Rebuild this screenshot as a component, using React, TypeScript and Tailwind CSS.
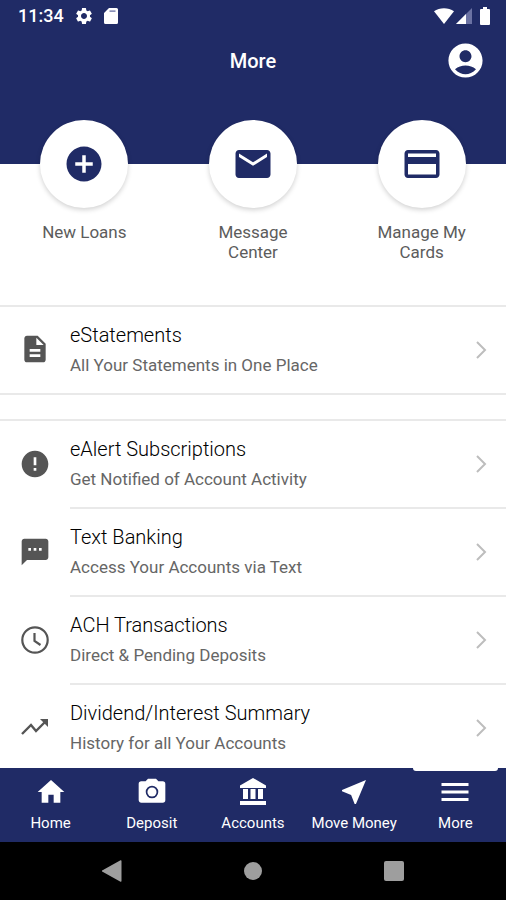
import type { ReactNode } from "react";
import {
  MdAccountCircle,
  MdAddCircle,
  MdCreditCard,
  MdDescription,
  MdError,
  MdHome,
  MdMail,
  MdMenu,
  MdNearMe,
  MdSettings,
  MdSms,
} from "react-icons/md";

type Row = { title: string; detail: string; icon: ReactNode };
type Tab = { label: string; icon: ReactNode; active?: boolean };

const shortcuts = [
  { label: "New Loans", icon: <MdAddCircle className="size-[42px]" /> },
  { label: "Message Center", icon: <MdMail className="size-[42px]" /> },
  { label: "Manage My Cards", icon: <MdCreditCard className="size-[42px]" /> },
];

const statements: Row[] = [
  { title: "eStatements", detail: "All Your Statements in One Place", icon: <MdDescription /> },
];

const services: Row[] = [
  { title: "eAlert Subscriptions", detail: "Get Notified of Account Activity", icon: <MdError /> },
  { title: "Text Banking", detail: "Access Your Accounts via Text", icon: <MdSms /> },
  { title: "ACH Transactions", detail: "Direct & Pending Deposits", icon: <ClockIcon /> },
  { title: "Dividend/Interest Summary", detail: "History for all Your Accounts", icon: <TrendIcon /> },
];

const tabs: Tab[] = [
  { label: "Home", icon: <MdHome className="size-8" /> },
  { label: "Deposit", icon: <CameraIcon /> },
  { label: "Accounts", icon: <BankIcon /> },
  { label: "Move Money", icon: <MdNearMe className="size-8" /> },
  { label: "More", icon: <MdMenu className="size-9" />, active: true },
];

function CameraIcon() {
  return (
    <svg viewBox="0 0 24 24" className="size-8" fill="currentColor" aria-hidden="true">
      <path
        fillRule="evenodd"
        d="M9 2 7.2 4H4a2 2 0 0 0-2 2v12c0 1.100.9 2 2 2h16a2 2 0 0 0 2-2V6a2 2 0 0 0-2-2h-3.200L15 2H9Zm3 5.300a4.700 4.700 0 1 1 0 9.400 4.700 4.700 0 0 1 0-9.400Z"
      />
      <circle cx="12" cy="12" r="3.400" />
    </svg>
  );
}

function BankIcon() {
  return (
    <svg viewBox="0 0 28 28" className="size-7" fill="currentColor" aria-hidden="true">
      <path d="M14 0 1 7.500V10h26V7.500L14 0ZM4 11h5v10H4zM11.500 11h5v10h-5zM19 11h5v10h-5zM1 23h26v4H1z" />
    </svg>
  );
}

function ClockIcon() {
  return (
    <svg viewBox="0 0 32 32" className="size-[1em]" fill="none" stroke="currentColor" strokeWidth="2.2" aria-hidden="true">
      <circle cx="16" cy="16" r="12.700" />
      <path d="M15.500 9v8l6 4" />
    </svg>
  );
}

function TrendIcon() {
  return (
    <svg viewBox="0 0 32 32" className="size-[1em]" fill="none" stroke="currentColor" strokeWidth="2.4" aria-hidden="true">
      <path d="m3 23 9-9 5 6 10-10" />
      <path fill="currentColor" stroke="none" d="M21 8h8v8Z" />
    </svg>
  );
}

function StatusBar() {
  return (
    <div className="flex h-8 items-center justify-between pr-4 pl-[18px]">
      <div className="flex items-center">
        <span className="text-[18px] leading-6 font-medium">11:34</span>
        <MdSettings className="ml-[10px] size-5" />
        <svg viewBox="0 0 14 16" className="ml-[10px] h-4 w-[14px]" aria-hidden="true">
          <path fill="#fff" d="M5 0h7.500A1.500 1.500 0 0 1 14 1.500v13a1.500 1.500 0 0 1-1.500 1.500h-11A1.500 1.500 0 0 1 0 14.500V5Z" />
          <path fill="#8b91b8" d="M5.500 2.300h6v1.700h-6z" />
        </svg>
      </div>
      <div className="flex items-center">
        <svg viewBox="0 0 20 16" className="h-4 w-5" aria-hidden="true">
          <path fill="#fff" d="M10 16 0 3.200C5.500-.9 14.500-.9 20 3.200Z" />
        </svg>
        <svg viewBox="0 0 16 16" className="ml-[2px] size-4" aria-hidden="true">
          <path fill="#6b72a3" d="M16 0v16H0Z" />
          <path fill="#fff" d="M10 6v10H0Z" />
        </svg>
        <svg viewBox="0 0 10 18" className="ml-2 h-[18px] w-[10px]" aria-hidden="true">
          <path fill="#fff" d="M3 0h4v2h2a1 1 0 0 1 1 1v14a1 1 0 0 1-1 1H1a1 1 0 0 1-1-1V3a1 1 0 0 1 1-1h2Z" />
        </svg>
      </div>
    </div>
  );
}

function ListGroup({ rows }: { rows: Row[] }) {
  return (
    <ul className="border-y-2 border-[#e9e9e9]">
      {rows.map((row, index) => (
        <li key={row.title}>
          <button type="button" className="flex w-full items-stretch pl-[19px] text-left">
            <span className="flex w-[51px] shrink-0 items-center pb-[2px] text-[32px] text-[#555]">{row.icon}</span>
            <span
              className={
                index < rows.length - 1
                  ? "flex h-[88px] flex-1 items-center justify-between border-b-2 border-[#e9e9e9] pr-[17px]"
                  : "flex h-[86px] flex-1 items-center justify-between pr-[17px]"
              }
            >
              <span className="flex flex-col gap-1 pb-[2px]">
                <span className="text-[20px] leading-7 font-light text-black">{row.title}</span>
                <span className="text-[17px] leading-6 text-[#666]">{row.detail}</span>
              </span>
              <svg viewBox="0 0 16 20" className="h-5 w-4" fill="none" stroke="#bdbdbd" strokeWidth="2" aria-hidden="true">
                <path d="m4 2 8 8-8 8" />
              </svg>
            </span>
          </button>
        </li>
      ))}
    </ul>
  );
}

export default function App() {
  return (
    <div className="flex h-screen flex-col bg-white font-[Roboto,sans-serif]">
      <header className="h-[164px] shrink-0 bg-[#202b66] text-white">
        <StatusBar />
        <div className="grid grid-cols-[1fr_auto_1fr] items-center px-5 pt-2">
          <h1 className="col-start-2 text-[20px] leading-7 font-medium">More</h1>
          <button type="button" aria-label="Profile" className="justify-self-end">
            <MdAccountCircle className="size-[41px]" />
          </button>
        </div>
      </header>

      <main className="-mt-11 min-h-0 flex-1 overflow-y-auto [scrollbar-width:none]">
        <div className="grid grid-cols-3 pb-[43px]">
          {shortcuts.map((item) => (
            <button key={item.label} type="button" className="flex flex-col items-center">
              <span className="flex size-[88px] items-center justify-center rounded-full bg-white text-[#202b66] shadow-[0_2px_5px_rgba(0,0,0,0.18)]">
                {item.icon}
              </span>
              <span className="mt-[14px] w-[100px] text-[17px] leading-5 text-[#5c5c5c]">{item.label}</span>
            </button>
          ))}
        </div>
        <ListGroup rows={statements} />
        <div className="h-6" />
        <ListGroup rows={services} />
      </main>

      <nav className="grid h-[74px] shrink-0 grid-cols-5 bg-[#202b66] text-white">
        {tabs.map((tab) => (
          <a
            key={tab.label}
            href="#"
            aria-current={tab.active ? "page" : undefined}
            className="relative flex flex-col items-center pt-[6px]"
          >
            {tab.active && <span className="absolute inset-x-2 top-0 h-[3px] rounded-b-sm bg-white" />}
            <span className="flex h-9 items-center">{tab.icon}</span>
            <span className="text-[15px] leading-[26px] whitespace-nowrap">{tab.label}</span>
          </a>
        ))}
      </nav>

      <div className="grid h-[58px] shrink-0 grid-cols-[1fr_auto_1fr] items-center gap-[122px] bg-black text-[#9e9e9e]">
        <button type="button" aria-label="Back" className="justify-self-end">
          <svg viewBox="0 0 20 22" className="h-[22px] w-5" fill="currentColor" aria-hidden="true">
            <path d="M18.500.3 1 10a1 1 0 0 0 0 2l17.500 9.700c.5.300 1 0 1-.7V1c0-.700-.500-1-1-.7Z" />
          </svg>
        </button>
        <button type="button" aria-label="Home screen" className="size-[18px] rounded-full bg-[#9e9e9e]" />
        <button type="button" aria-label="Recent apps" className="size-5 rounded-[2px] bg-[#9e9e9e]" />
      </div>
    </div>
  );
}
